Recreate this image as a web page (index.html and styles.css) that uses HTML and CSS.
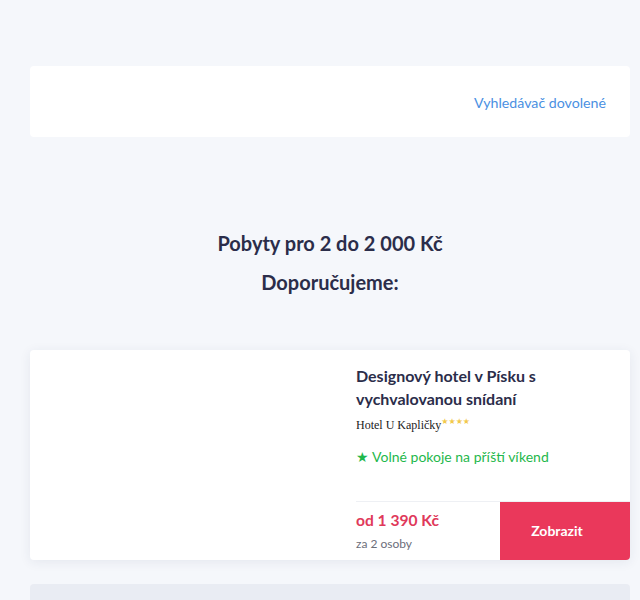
FILE: index.html
```html
<!DOCTYPE html>
<html lang="cs">
<head>
<meta charset="utf-8">
<link rel="stylesheet" href="styles.css">
</head>
<body>
<div class="page">
  <header class="topbar">
    <a class="toplink" href="#">Vyhledávač dovolené</a>
  </header>
  <section class="intro">
    <h1 class="title">Pobyty pro 2 do 2 000 Kč</h1>
    <h2 class="subtitle">Doporučujeme:</h2>
  </section>
  <article class="card">
    <div class="card-img"></div>
    <div class="card-body">
      <div class="card-info">
        <h3 class="card-title">Designový hotel v Písku s vychvalovanou snídaní</h3>
        <div class="hotel">Hotel U Kapličky<span class="stars">★★★★</span></div>
        <div class="avail">★ Volné pokoje na příští víkend</div>
      </div>
      <div class="card-foot">
        <div class="price">
          <div class="amount">od 1 390 Kč</div>
          <div class="persons">za 2 osoby</div>
        </div>
        <a class="btn" href="#">Zobrazit</a>
      </div>
    </div>
  </article>
  <div class="card card-next"></div>
</div>
</body>
</html>
```
FILE: styles.css
```css
* { box-sizing: border-box; }
html, body { margin: 0; padding: 0; }
body {
  background: #f5f7fb;
  font-family: Lato, "Open Sans", sans-serif;
  color: #2b2d4a;
}
.page {
  padding: 66px 10px 0 30px;
}
.topbar {
  background: #fff;
  border-radius: 4px;
  height: 71px;
  display: flex;
  align-items: center;
  justify-content: flex-end;
  padding: 0 24px 0 0;
}
.toplink {
  color: #4a90e2;
  font-size: 14.2px;
  text-decoration: none;
  margin-top: 1px;
}
.intro {
  padding-top: 94px;
  text-align: center;
}
.title {
  margin: 0;
  font-size: 20px;
  font-weight: 700;
  line-height: 24px;
}
.subtitle {
  margin: 15px 0 0;
  font-size: 20px;
  font-weight: 700;
  line-height: 24px;
}
.card {
  margin-top: 56px;
  background: #fff;
  border-radius: 4px;
  box-shadow: 0 2px 12px rgba(40, 50, 90, 0.08);
  display: flex;
  height: 210px;
  overflow: hidden;
}
.card-img {
  width: 310px;
  flex: none;
}
.card-body {
  flex: 1;
  display: flex;
  flex-direction: column;
  padding-left: 16px;
}
.card-info {
  flex: 1;
  padding-top: 14px;
}
.card-title {
  margin: 0;
  font-size: 16px;
  font-weight: 700;
  line-height: 23px;
  padding-right: 40px;
}
.hotel {
  margin-top: 7px;
  font-family: "Liberation Serif", "Times New Roman", serif;
  font-size: 12px;
  color: #222;
}
.stars {
  color: #f2c94c;
  font-family: "DejaVu Sans", sans-serif;
  font-size: 8px;
  vertical-align: 5px;
}
.avail {
  margin-top: 15px;
  color: #1fb84c;
  font-size: 14px;
}
.card-foot {
  display: flex;
  height: 59px;
  border-top: 1px solid #eef0f4;
}
.price {
  flex: 1;
  padding-top: 8px;
}
.amount {
  color: #e0395a;
  font-size: 15.6px;
  font-weight: 700;
  line-height: 20px;
}
.persons {
  margin-top: 6px;
  color: #6b6e7a;
  font-size: 12px;
}
.btn {
  width: 130px;
  background: #ea385b;
  color: #fff;
  font-size: 14px;
  font-weight: 700;
  text-decoration: none;
  display: flex;
  align-items: center;
  justify-content: center;
  padding-right: 16px;
  padding-bottom: 1px;
}
.card-next {
  margin-top: 24px;
  background: #e9ecf3;
  box-shadow: none;
  height: 40px;
}
```
